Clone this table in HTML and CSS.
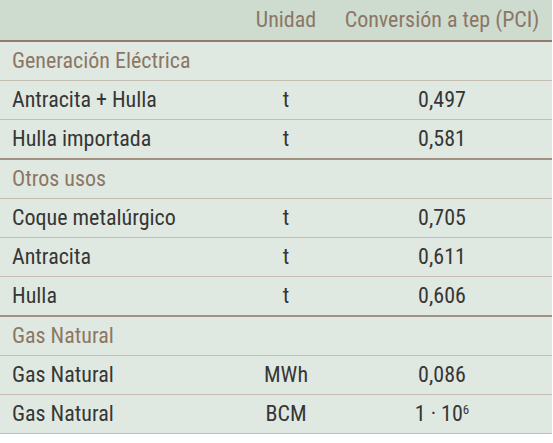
FILE: index.html
```html
<!DOCTYPE html>
<html lang="es">
<head>
<meta charset="utf-8">
<title>Conversión a tep</title>
<link rel="stylesheet" href="styles.css">
</head>
<body>
<table class="conv">
  <colgroup>
    <col class="c-name">
    <col class="c-unit">
    <col class="c-val">
  </colgroup>
  <thead>
    <tr class="head">
      <th></th>
      <th>Unidad</th>
      <th>Conversión a tep (PCI)</th>
    </tr>
  </thead>
  <tbody>
    <tr class="section"><td colspan="3">Generación Eléctrica</td></tr>
    <tr><td>Antracita + Hulla</td><td class="ctr">t</td><td class="ctr">0,497</td></tr>
    <tr class="last"><td>Hulla importada</td><td class="ctr">t</td><td class="ctr">0,581</td></tr>
    <tr class="section"><td colspan="3">Otros usos</td></tr>
    <tr><td>Coque metalúrgico</td><td class="ctr">t</td><td class="ctr">0,705</td></tr>
    <tr><td>Antracita</td><td class="ctr">t</td><td class="ctr">0,611</td></tr>
    <tr class="last"><td>Hulla</td><td class="ctr">t</td><td class="ctr">0,606</td></tr>
    <tr class="section"><td colspan="3">Gas Natural</td></tr>
    <tr><td>Gas Natural</td><td class="ctr">MWh</td><td class="ctr">0,086</td></tr>
    <tr><td>Gas Natural</td><td class="ctr">BCM</td><td class="ctr">1 · 10<sup>6</sup></td></tr>
  </tbody>
</table>
</body>
</html>
```

FILE: styles.css
```css
html, body {
  margin: 0;
  padding: 0;
  background: #ffffff;
}

.conv {
  width: 552px;
  border-collapse: collapse;
  table-layout: fixed;
  font-family: Roboto, "Liberation Sans", sans-serif;
  font-stretch: condensed;
  font-size: 22px;
  font-weight: 390;
  line-height: 26px;
  color: #363636;
  background: #e0e9e1;
}

.c-name { width: 240px; }
.c-unit { width: 92px; }
.c-val { width: 220px; }

.head th {
  background: #cddccf;
  color: #8c7665;
  font-weight: 390;
  height: 40px;
  padding: 0;
  text-align: center;
  border-bottom: 2px solid #8f7c6d;
}

.conv td {
  height: 38px;
  padding: 0 0 0 12px;
  border-bottom: 1px solid #c4bcb1;
  white-space: nowrap;
}

.conv td.ctr {
  padding: 0;
  text-align: center;
}

.section td {
  color: #8c7665;
}

.conv tr.last td {
  border-bottom: 2px solid #a09183;
}

sup {
  font-size: 13px;
  vertical-align: 7px;
  line-height: 0;
}
```
